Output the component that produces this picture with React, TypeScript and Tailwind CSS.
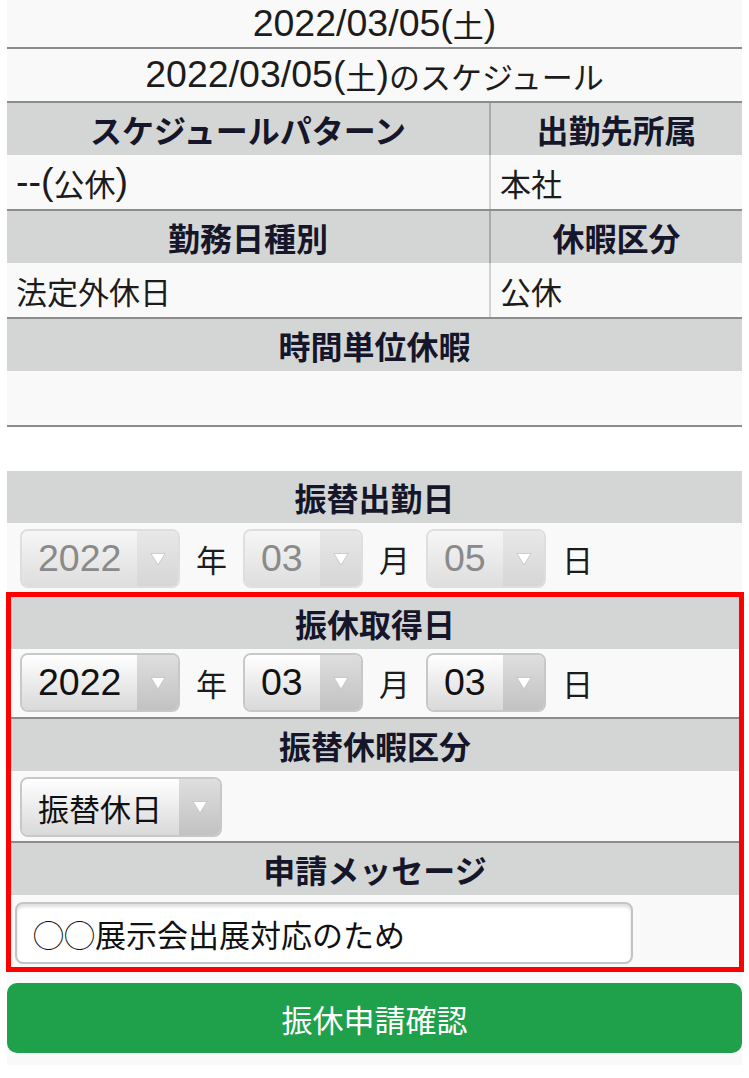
import React from "react";

function Mixed({ text }: { text: string }) {
  const parts = text.match(/[\x00-\x7F]+|[^\x00-\x7F]+/g) || [];
  return (
    <>
      {parts.map((p, i) =>
        /[\x00-\x7F]/.test(p[0]) ? (
          <span key={i} className="font-['Liberation_Sans',Arial,sans-serif] text-[37.5px] leading-none">
            {p}
          </span>
        ) : (
          <span key={i} className="text-[31px] leading-none">
            {p}
          </span>
        )
      )}
    </>
  );
}

function Arrow() {
  return (
    <svg width="16" height="14" viewBox="0 0 16 14">
      <polygon points="1,1.5 15,1.5 8,13" fill="#ffffff" stroke="#b5b5b5" strokeWidth="0.6" />
    </svg>
  );
}

function Sel({ value, wClass, disabled }: { value: string; wClass: string; disabled?: boolean }) {
  return (
    <div
      className={`flex h-[59px] shrink-0 overflow-hidden rounded-[8px] border-2 ${wClass} ${
        disabled ? "border-[#dedede]" : "border-[#c8c8c8]"
      }`}
    >
      <div
        className={`flex flex-1 items-center pl-[16px] bg-linear-to-b ${
          disabled ? "from-[#f6f6f6] to-[#dedede] text-[#8a8a8a]" : "from-[#ffffff] to-[#d9d9d9] text-[#111111]"
        }`}
      >
        <Mixed text={value} />
      </div>
      <div
        className={`flex w-[41px] items-center justify-center bg-linear-to-b ${
          disabled ? "from-[#e8e8e8] to-[#d6d6d6]" : "from-[#dedede] to-[#c2c2c2]"
        }`}
      >
        <Arrow />
      </div>
    </div>
  );
}

function DateRow({ y, m, d, disabled }: { y: string; m: string; d: string; disabled?: boolean }) {
  return (
    <div className="flex items-center gap-4 text-[#1c1c1c]">
      <Sel value={y} wClass="w-[160px]" disabled={disabled} />
      <span className="text-[31px] leading-none">年</span>
      <Sel value={m} wClass="w-[120px]" disabled={disabled} />
      <span className="text-[31px] leading-none">月</span>
      <Sel value={d} wClass="w-[120px]" disabled={disabled} />
      <span className="text-[31px] leading-none">日</span>
    </div>
  );
}

function Header({ children }: { children: React.ReactNode }) {
  return (
    <div className="flex h-[52px] items-center justify-center bg-[#d4d6d6] text-[32px] font-bold leading-none text-[#16162a]">
      {children}
    </div>
  );
}

function Divider() {
  return <div className="h-[2px] bg-[#8c8c8c]" />;
}

export default function App() {
  return (
    <div className="min-h-screen bg-white px-[7px] font-['Noto_Sans_CJK_JP',sans-serif] text-[#1c1c1c]">
      <div className="flex h-[47px] items-center justify-center bg-[#f9f9f9]">
        <Mixed text="2022/03/05(土)" />
      </div>
      <Divider />
      <div className="flex h-[52px] items-center justify-center bg-[#f9f9f9]">
        <Mixed text="2022/03/05(土)のスケジュール" />
      </div>
      <Divider />

      <div className="grid grid-cols-[484px_1fr]">
        <div className="flex h-[52px] items-center justify-center border-r-2 border-[#a9a9a9] bg-[#d4d6d6] text-[32px] font-bold leading-none text-[#16162a]">
          スケジュールパターン
        </div>
        <div className="flex h-[52px] items-center justify-center bg-[#d4d6d6] text-[32px] font-bold leading-none text-[#16162a]">
          出勤先所属
        </div>
        <div className="flex h-[54px] items-center border-r-2 border-[#d2d2d2] bg-[#f9f9f9] pl-[9px]">
          <Mixed text="--(公休)" />
        </div>
        <div className="flex h-[54px] items-center bg-[#f9f9f9] pl-[9px] text-[31px] leading-none">本社</div>
      </div>
      <Divider />
      <div className="grid grid-cols-[484px_1fr]">
        <div className="flex h-[52px] items-center justify-center border-r-2 border-[#a9a9a9] bg-[#d4d6d6] text-[32px] font-bold leading-none text-[#16162a]">
          勤務日種別
        </div>
        <div className="flex h-[52px] items-center justify-center bg-[#d4d6d6] text-[32px] font-bold leading-none text-[#16162a]">
          休暇区分
        </div>
        <div className="flex h-[54px] items-center border-r-2 border-[#d2d2d2] bg-[#f9f9f9] pl-[9px] text-[31px] leading-none">
          法定外休日
        </div>
        <div className="flex h-[54px] items-center bg-[#f9f9f9] pl-[9px] text-[31px] leading-none">公休</div>
      </div>
      <Divider />
      <Header>時間単位休暇</Header>
      <div className="h-[54px] bg-[#f9f9f9]" />
      <Divider />

      <div className="h-[44px]" />

      <Header>振替出勤日</Header>
      <div className="h-[69px] bg-[#f9f9f9] pl-[13px] pt-[6px]">
        <DateRow y="2022" m="03" d="05" disabled />
      </div>

      <div className="-ml-px -mr-[2px] border-[5px] border-[#ff0000]">
        <Header>振休取得日</Header>
        <div className="h-[68px] bg-[#f9f9f9] pl-[9px] pt-[4px]">
          <DateRow y="2022" m="03" d="03" />
        </div>
        <Divider />
        <Header>振替休暇区分</Header>
        <div className="h-[70px] bg-[#f9f9f9] pl-[9px] pt-[6px]">
          <Sel value="振替休日" wClass="w-[202px] !h-[60px]" />
        </div>
        <Divider />
        <Header>申請メッセージ</Header>
        <div className="h-[72px] bg-[#f9f9f9] pl-[4px] pt-[7px]">
          <div className="flex h-[62px] w-[618px] items-center rounded-[8px] border-2 border-[#c4c4c4] bg-white pl-[16px] text-[31px] leading-none text-[#111111] shadow-[inset_0_3px_3px_rgba(0,0,0,0.12)]">
            ◯◯展示会出展対応のため
          </div>
        </div>
      </div>

      <div className="bg-[#f9f9f9] pb-[12px] pt-[11px]">
        <button className="flex h-[70px] w-full items-center justify-center rounded-[10px] bg-[#1fa04a] text-[31px] leading-none text-white">
          振休申請確認
        </button>
      </div>
    </div>
  );
}
